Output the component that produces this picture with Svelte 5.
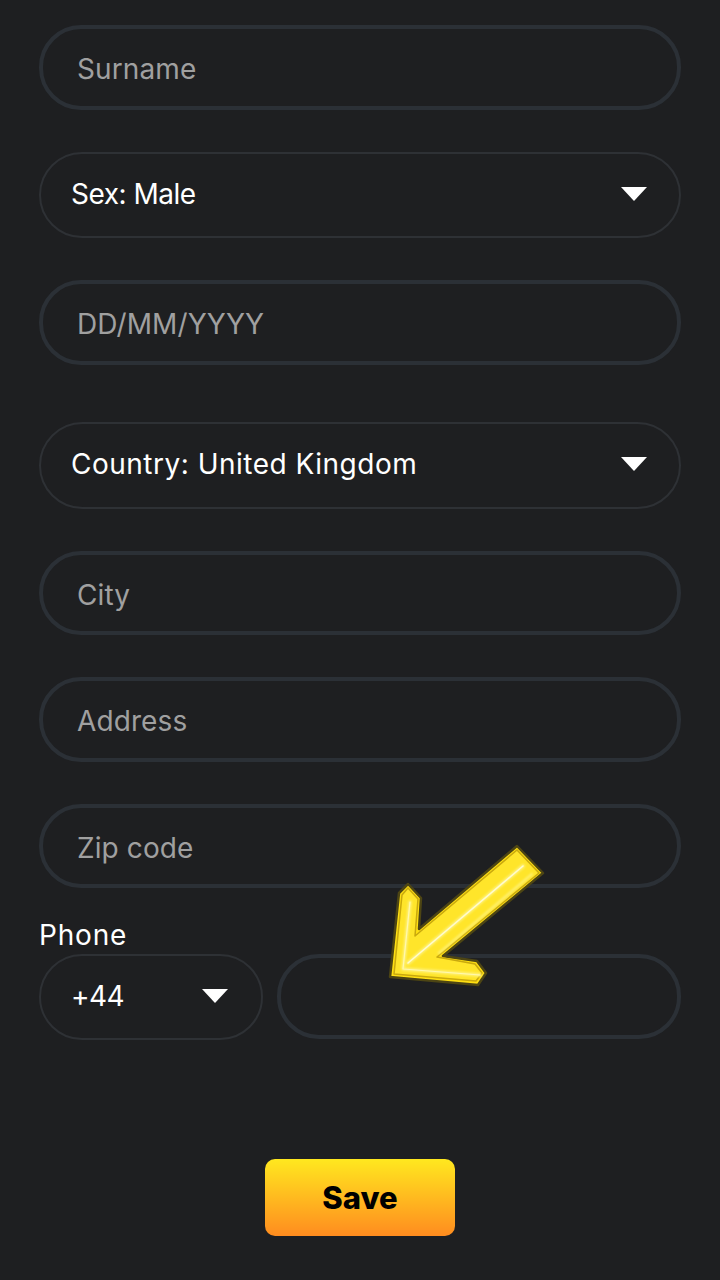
<script>
  const fields = [
    { kind: "input", placeholder: "Surname" },
    { kind: "select", value: "Sex: Male", tight: true },
    { kind: "input", placeholder: "DD/MM/YYYY" },
    { kind: "select", value: "Country: United Kingdom", wide: true },
    { kind: "input", placeholder: "City" },
    { kind: "input", placeholder: "Address" },
    { kind: "input", placeholder: "Zip code" }
  ];
</script>

<main class="page">
  <form class="form">
    {#each fields as f}
      {#if f.kind === "input"}
        <input class="field" type="text" placeholder={f.placeholder} />
      {:else}
        <div class="select" class:wide={f.wide} class:tight={f.tight}>
          <span>{f.value}</span>
          <i class="caret"></i>
        </div>
      {/if}
    {/each}

    <div class="phone">
      <label for="phone">Phone</label>
      <div class="phone-row">
        <div class="select code tight">
          <span>+44</span>
          <i class="caret"></i>
        </div>
        <input id="phone" class="field number" type="text" />
      </div>
    </div>

    <button class="save" type="button">Save</button>
  </form>

  <svg class="arrow" width="720" height="1280" viewBox="0 0 720 1280" fill="none" aria-hidden="true">
    <defs>
      <filter id="neon" x="-20%" y="-20%" width="140%" height="140%">
        <feGaussianBlur stdDeviation="0.9" />
      </filter>
    </defs>
    <path d="M517 846 L543 873 L443 956 L477 961 L486 973 L478 985 L390 977 L399 893 L408 884 L421 898 L419 929 Z" fill="#ffdf12" stroke="#4d4514" stroke-width="2.5" stroke-linejoin="round" />
    <path d="M517 850 L539 873 L437 957 L475 964 L482 973 L476 981 L394 974 L402 895 L408 888 L418 899 L415 936 Z" fill="#ffe52a" stroke="#c9a90e" stroke-width="1.5" stroke-linejoin="round" />
    <path d="M523 866 L408 963" stroke="#fff27a" stroke-width="4" stroke-linecap="round" filter="url(#neon)" />
    <path d="M523 866 L408 963" stroke="#fffbd0" stroke-width="1.5" stroke-linecap="round" />
    <path d="M532 874 L439 953" stroke="#fff27a" stroke-width="2" stroke-linecap="round" filter="url(#neon)" />
    <path d="M410 902 L403 969 L480 975" stroke="#fff27a" stroke-width="3.5" stroke-linecap="round" stroke-linejoin="round" filter="url(#neon)" />
    <path d="M410 902 L403 969 L480 975" stroke="#fff8b0" stroke-width="1.2" stroke-linecap="round" stroke-linejoin="round" />
  </svg>
</main>

<style>
  :global(body) {
    background: #1e1f21;
  }

  .page {
    position: relative;
    width: 720px;
    height: 1280px;
    overflow: hidden;
    background: #1e1f21;
    font-family: "Inter", "Noto Sans", sans-serif;
    color: #fff;
  }

  .form {
    display: flex;
    flex-direction: column;
    gap: 42px;
    padding: 25px 39px 0;
  }

  .field {
    box-sizing: border-box;
    width: 100%;
    height: 84.5px;
    padding: 4px 34px 0;
    background: transparent;
    border: 4px solid #2b3036;
    border-radius: 42px;
    outline: none;
    color: #fff;
    font: inherit;
    font-size: 28px;
    letter-spacing: 0.1px;
  }

  .field::placeholder {
    color: #a0a0a0;
    opacity: 1;
  }

  .select {
    box-sizing: border-box;
    display: flex;
    align-items: center;
    justify-content: space-between;
    height: 86.5px;
    padding: 0 32px 2px 30px;
    border: 2px solid #2e3135;
    border-radius: 44px;
    font-size: 28px;
    letter-spacing: 0.5px;
  }

  .select.tight {
    letter-spacing: -0.5px;
  }

  .select.wide {
    margin-top: 15.5px;
  }

  .caret {
    width: 0;
    height: 0;
    border-left: 13.5px solid transparent;
    border-right: 13.5px solid transparent;
    border-top: 14px solid #fff;
  }

  .phone {
    display: flex;
    flex-direction: column;
    margin-top: -16px;
  }

  label {
    font-size: 28px;
    line-height: 32px;
    letter-spacing: 0.8px;
    margin-top: 5px;
    margin-bottom: 3px;
  }

  .phone-row {
    display: flex;
    align-items: flex-start;
    gap: 14px;
  }

  .select.code {
    flex: 0 0 224px;
    height: 86px;
    padding-right: 33px;
  }

  .number {
    flex: 1;
    min-width: 0;
  }

  .save {
    align-self: center;
    width: 190px;
    height: 77px;
    margin-top: 77px;
    border: 0;
    border-radius: 10px;
    background: linear-gradient(180deg, #ffe81f 0%, #ff8c1f 100%);
    color: #000;
    font: inherit;
    font-size: 31px;
    font-weight: 800;
  }

  .arrow {
    position: absolute;
    inset: 0;
    pointer-events: none;
  }
</style>
